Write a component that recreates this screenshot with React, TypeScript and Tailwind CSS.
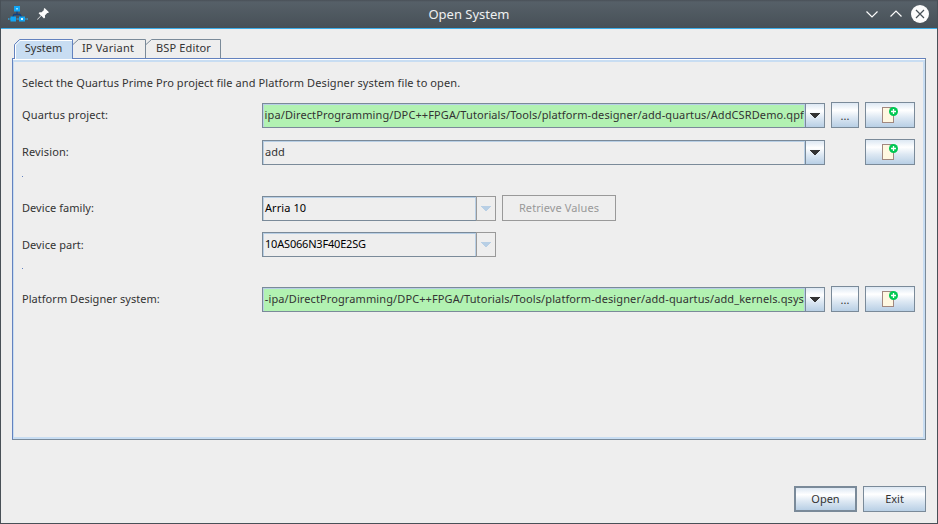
import type { ReactNode } from 'react';

const FONT = "font-['Noto_Sans',sans-serif]";
const METAL = 'bg-[linear-gradient(to_bottom,#dde8f3_0%,#ffffff_30%,#dde8f3_60%,#b8cfe5_100%)]';

function AppIcon() {
  return (
    <svg width="20" height="16" viewBox="0 0 20 16">
      <path d="M9 5v3M4.500 11.500 6 8.500h6l2 3" stroke="#123f80" strokeWidth="1.300" fill="none" />
      <path d="M0 13h20" stroke="#3a8fb8" strokeWidth="2" strokeDasharray="1.500 .8" />
      <rect x="6" y="0" width="6" height="5.500" fill="#12a5f4" />
      <rect x="2.500" y="10.500" width="5.500" height="5" fill="#12a5f4" />
      <rect x="11" y="10.500" width="6" height="5" fill="#12a5f4" />
      <rect x="8" y="2" width="2" height="1.500" fill="#8fe0ff" />
      <rect x="13" y="12" width="2" height="2" fill="#d5f4ff" />
    </svg>
  );
}

function PinIcon() {
  return (
    <svg width="12" height="12" viewBox="0 0 12 12" fill="#fcfcfc">
      <path d="M7.600 0 12 4.200l-1 .9-.8-.1-2.300 2.400.2 2-1.100 1-2.700-2.700L.8 11.400 0 11.800l.4-.9 3.400-3.500L1.600 5.200l1-1 2 .1L7 2.100l-.3-1z" />
    </svg>
  );
}

function Arrow({ disabled }: { disabled?: boolean }) {
  return (
    <svg width="10" height="5" viewBox="0 0 10 5" shapeRendering="crispEdges">
      <path d="M0 0h10v1H9v1H8v1H7v1H6v1H4V4H3V3H2V2H1V1H0z" fill={disabled ? '#b8cfe5' : '#333333'} />
    </svg>
  );
}

function NewFileIcon() {
  return (
    <svg width="16" height="16" viewBox="0 0 16 16" overflow="visible">
      <rect x="0.5" y="0.5" width="11" height="15" fill="#fff8e1" stroke="#a1887f" />
      <circle cx="11.500" cy="4.500" r="4.500" fill="#00c853" />
      <path d="M11.500 2v5M9 4.500h5" stroke="#fff" strokeWidth="1.300" />
    </svg>
  );
}

function Combo({ value, width, green, disabled, spacing = '', end }: {
  value: string; width: string; green?: boolean; disabled?: boolean; spacing?: string; end?: boolean;
}) {
  return (
    <div className={`flex h-[25px] ${width}`}>
      <div className={`flex min-w-0 flex-1 items-center overflow-hidden border border-r-0 border-[#7a8a99] ${green ? 'bg-[#b2f2b2]' : ''}`}>
        <div className={`flex h-full w-full items-center overflow-hidden border border-b-0 border-[#b8cfe5] pb-[3px] ${end ? 'justify-end' : 'pl-px'}`}>
          <span className={`whitespace-nowrap ${spacing} ${disabled ? 'text-black' : ''}`}>{value}</span>
        </div>
      </div>
      <div className={`flex w-5 shrink-0 items-center justify-center border ${disabled ? 'border-[#999999]' : `border-[#7a8a99] ${METAL}`}`}>
        <Arrow disabled={disabled} />
      </div>
    </div>
  );
}

function Button({ children, className }: { children: ReactNode; className: string }) {
  return (
    <button className={`flex h-[26px] shrink-0 items-center justify-center border-[#7a8a99] ${METAL} ${className}`}>
      {children}
    </button>
  );
}

function Row({ label, spacing = '', height, children }: { label: string; spacing?: string; height: string; children: ReactNode }) {
  return (
    <div className={`flex items-center ${height}`}>
      <div className={`w-60 shrink-0 ${spacing}`}>{label}</div>
      {children}
    </div>
  );
}

function Tab({ label, width, active, text = '' }: { label: string; width: number; active?: boolean; text?: string }) {
  const stroke = active ? '#6382bf' : '#7a8a99';
  return (
    <div className="relative h-5 shrink-0" style={{ width }}>
      <svg className="absolute inset-0" width={width} height="20">
        <path
          d={active ? `M.5 20V5.500L5.500.5H${width - 0.5}V20` : `M0 5.500 5.500.5H${width - 0.5}V19`}
          fill={active ? '#c8ddf2' : 'none'}
          stroke={stroke}
        />
        {active && <path d={`M1.500 20V6L6 1.500H${width - 1}`} fill="none" stroke="#fff" />}
      </svg>
      <span className={`relative flex h-4 items-center justify-center whitespace-nowrap ${text}`}>{label}</span>
    </div>
  );
}

export default function App() {
  return (
    <div className={`flex h-[524px] w-[938px] flex-col border border-t-0 border-[#485057] bg-[#eeeeee] text-[11px] leading-[15px] text-[#333333] ${FONT}`}>
      <header className="grid h-[29px] shrink-0 grid-cols-[1fr_auto_1fr] items-center border-b border-[#3daee9] bg-[linear-gradient(to_bottom,#495057_0px,#566068_2px,#475057_28px)]">
        <div className="flex items-center gap-[9px] pl-[7px]">
          <AppIcon />
          <PinIcon />
        </div>
        <h1 className="text-[13px] leading-4 text-[#eff0f1]">Open System</h1>
        <div className="flex items-center justify-end pr-[7px]">
          <svg width="64" height="18" viewBox="0 0 64 18" fill="none" stroke="#fcfcfc" strokeWidth="1.200">
            <path d="M.5 6.500 6 12l5.500-5.500M24.500 11.500 30 6l5.500 5.500" />
            <circle cx="54" cy="9" r="9" fill="#fcfcfc" stroke="none" />
            <path d="M50 5l8 8M58 5l-8 8" stroke="#475057" />
          </svg>
        </div>
      </header>
      <main className="flex flex-1 flex-col pl-[11px] pr-[11px] pt-[10px]">
        <nav className="z-10 -mb-px flex h-5 pl-0.5">
          <Tab label="System" width={59} active />
          <Tab label="IP Variant" width={73} text="pr-[3px] tracking-[0.2px]" />
          <Tab label="BSP Editor" width={75} text="tracking-[0.15px]" />
        </nav>
        <section className="h-[382px] border border-b-[#7a8a99] border-l-[#6382bf] border-r-[#7a8a99] border-t-[#6382bf]">
          <div className="h-full border-t border-white">
            <div className="flex h-full flex-col border-2 border-l border-[#c8ddf2] pl-2 pr-2 pt-[13px]">
              <p className="tracking-[0.095px]">Select the Quartus Prime Pro project file and Platform Designer system file to open.</p>
              <div className="mt-3">
                <Row label="Quartus project:" spacing="pb-0.5 tracking-[0.13px]" height="h-[26px]">
                  <Combo width="w-[563px]" green end spacing="tracking-[0.11px]" value="ipa/DirectProgramming/DPC++FPGA/Tutorials/Tools/platform-designer/add-quartus/AddCSRDemo.qpf" />
                  <Button className="ml-1.5 w-7 border">...</Button>
                  <Button className="ml-1.5 w-[50px] border"><NewFileIcon /></Button>
                </Row>
              </div>
              <div className="mt-[11px]">
                <Row label="Revision:" spacing="pb-0.5 tracking-[0.13px]" height="h-[26px]">
                  <Combo width="w-[563px]" value="add" />
                  <Button className="ml-10 w-[50px] border"><NewFileIcon /></Button>
                </Row>
              </div>
              <div className="mt-[11px] size-px bg-[#6382bf]" />
              <div className="mt-[18px]">
                <Row label="Device family:" spacing="pb-0.5 tracking-[0.05px]" height="h-[26px]">
                  <Combo width="w-[234px]" disabled spacing="tracking-[0.08px]" value="Arria 10" />
                  <button className="ml-1.5 h-[26px] w-[114px] border border-[#999999] pb-0.5 tracking-[0.1px] text-[#999999]">Retrieve Values</button>
                </Row>
              </div>
              <div className="mt-[11px]">
                <Row label="Device part:" spacing="tracking-[0.05px]" height="h-[25px]">
                  <Combo width="w-[234px]" disabled spacing="tracking-[-0.19px]" value="10AS066N3F40E2SG" />
                </Row>
              </div>
              <div className="mt-[11px] size-px bg-[#6382bf]" />
              <div className="mt-[17px]">
                <Row label="Platform Designer system:" spacing="pb-0.5 tracking-[0.04px]" height="h-[26px]">
                  <Combo width="w-[563px]" green end spacing="tracking-[0.105px]" value="-ipa/DirectProgramming/DPC++FPGA/Tutorials/Tools/platform-designer/add-quartus/add_kernels.qsys" />
                  <Button className="ml-1.5 w-7 border">...</Button>
                  <Button className="ml-1.5 w-[50px] border"><NewFileIcon /></Button>
                </Row>
              </div>
            </div>
          </div>
        </section>
        <footer className="mt-[46px] flex justify-end gap-1.5">
          <Button className="w-[63px] border-2 pb-0.5">Open</Button>
          <Button className="w-[63px] border pb-0.5">Exit</Button>
        </footer>
      </main>
    </div>
  );
}
